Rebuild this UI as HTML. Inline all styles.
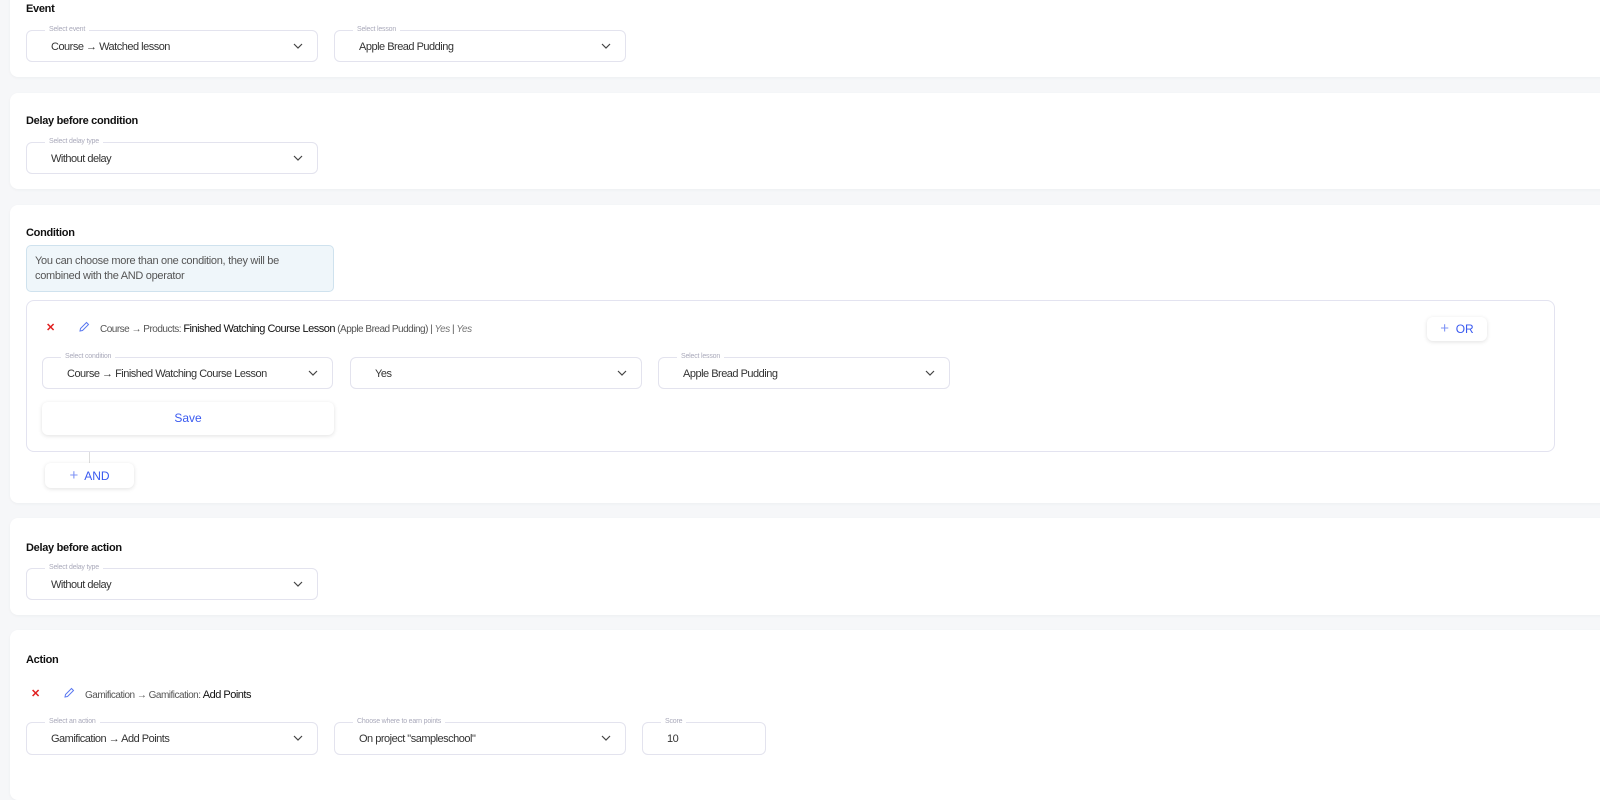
<!DOCTYPE html>
<html><head><style>
*{box-sizing:border-box;margin:0;padding:0}
body{width:1600px;height:780px;overflow:hidden;background:#f6f7f9;font-family:"Liberation Sans",sans-serif;position:relative;color:#333}
.card{position:absolute;left:10px;width:1620px;background:#fff;border-radius:8px;box-shadow:0 1px 3px rgba(0,0,0,0.04)}
.t{position:absolute;font-size:11px;font-weight:bold;color:#111;letter-spacing:-0.3px}
.sel{position:absolute;height:32px;border:1px solid #e3e3ee;border-radius:6px;background:#fff;font-size:11px;color:#333;letter-spacing:-0.5px}
.sel .v{position:absolute;left:24px;top:10px}
.sel .l{position:absolute;left:18px;top:-5px;font-size:7px;color:#aab;background:#fff;padding:0 4px;line-height:8px;letter-spacing:-0.2px}
.sel svg{position:absolute;right:14px;top:12px}
.btn{position:absolute;background:#fff;border-radius:6px;box-shadow:0 1px 4px rgba(0,0,0,0.12);color:#3a5af0;font-size:12px;text-align:center}
.x{position:absolute;color:#e02020;font-size:11px;font-weight:bold}
.small{position:absolute;font-size:10px;color:#555;letter-spacing:-0.5px;white-space:nowrap}
.small b{font-weight:normal;color:#111;font-size:11px}
.small i{color:#777}
</style></head><body>
<div class="card" style="top:-10px;height:87px"></div>
<div class="t" style="left:26px;top:3px">Event</div>
<div class="sel" style="left:26px;top:30px;width:292px"><span class="l">Select event</span><span class="v">Course → Watched lesson</span><svg width="10" height="6" viewBox="0 0 10 6"><path d="M1 1l4 4 4-4" fill="none" stroke="#444" stroke-width="1.2"/></svg></div>
<div class="sel" style="left:334px;top:30px;width:292px"><span class="l">Select lesson</span><span class="v">Apple Bread Pudding</span><svg width="10" height="6" viewBox="0 0 10 6"><path d="M1 1l4 4 4-4" fill="none" stroke="#444" stroke-width="1.2"/></svg></div>

<div class="card" style="top:93px;height:96px"></div>
<div class="t" style="left:26px;top:115px">Delay before condition</div>
<div class="sel" style="left:26px;top:142px;width:292px"><span class="l">Select delay type</span><span class="v">Without delay</span><svg width="10" height="6" viewBox="0 0 10 6"><path d="M1 1l4 4 4-4" fill="none" stroke="#444" stroke-width="1.2"/></svg></div>

<div class="card" style="top:205px;height:298px"></div>
<div class="t" style="left:26px;top:227px">Condition</div>
<div style="position:absolute;left:26px;top:245px;width:308px;height:47px;background:#eff6fa;border:1px solid #cfe2ee;border-radius:5px;font-size:11px;color:#555;padding:8px 8px;line-height:15px;letter-spacing:-0.3px">You can choose more than one condition, they will be combined with the AND operator</div>
<div style="position:absolute;left:26px;top:300px;width:1529px;height:152px;border:1px solid #e3e3f0;border-radius:8px"></div>
<div class="x" style="left:46px;top:321px">✕</div>
<svg style="position:absolute;left:78px;top:321px" width="12" height="12" viewBox="0 0 12 12"><path d="M2 10l0.5-2.5L8.5 1.5l2 2L4.5 9.5z" fill="none" stroke="#5a78f0" stroke-width="1"/></svg>
<div class="small" style="left:100px;top:323px">Course → Products: <b>Finished Watching Course Lesson</b> (Apple Bread Pudding) | <i>Yes</i> | <i>Yes</i></div>
<div class="btn" style="left:1427px;top:317px;width:60px;height:24px;line-height:24px"><span style="color:#7f93f5;font-size:15px">+</span>&nbsp; OR</div>
<div class="sel" style="left:42px;top:357px;width:291px"><span class="l">Select condition</span><span class="v">Course → Finished Watching Course Lesson</span><svg width="10" height="6" viewBox="0 0 10 6"><path d="M1 1l4 4 4-4" fill="none" stroke="#444" stroke-width="1.2"/></svg></div>
<div class="sel" style="left:350px;top:357px;width:292px"><span class="v">Yes</span><svg width="10" height="6" viewBox="0 0 10 6"><path d="M1 1l4 4 4-4" fill="none" stroke="#444" stroke-width="1.2"/></svg></div>
<div class="sel" style="left:658px;top:357px;width:292px"><span class="l">Select lesson</span><span class="v">Apple Bread Pudding</span><svg width="10" height="6" viewBox="0 0 10 6"><path d="M1 1l4 4 4-4" fill="none" stroke="#444" stroke-width="1.2"/></svg></div>
<div class="btn" style="left:42px;top:402px;width:292px;height:33px;line-height:33px">Save</div>
<div style="position:absolute;left:89px;top:452px;width:1px;height:12px;background:#ddd"></div>
<div class="btn" style="left:45px;top:463px;width:89px;height:25px;line-height:25px"><span style="color:#7f93f5;font-size:15px">+</span>&nbsp; AND</div>

<div class="card" style="top:518px;height:97px"></div>
<div class="t" style="left:26px;top:542px">Delay before action</div>
<div class="sel" style="left:26px;top:568px;width:292px"><span class="l">Select delay type</span><span class="v">Without delay</span><svg width="10" height="6" viewBox="0 0 10 6"><path d="M1 1l4 4 4-4" fill="none" stroke="#444" stroke-width="1.2"/></svg></div>

<div class="card" style="top:630px;height:170px"></div>
<div class="t" style="left:26px;top:654px">Action</div>
<div class="x" style="left:31px;top:687px">✕</div>
<svg style="position:absolute;left:63px;top:687px" width="12" height="12" viewBox="0 0 12 12"><path d="M2 10l0.5-2.5L8.5 1.5l2 2L4.5 9.5z" fill="none" stroke="#5a78f0" stroke-width="1"/></svg>
<div class="small" style="left:85px;top:689px">Gamification → Gamification: <b>Add Points</b></div>
<div class="sel" style="left:26px;top:722px;width:292px;height:33px"><span class="l">Select an action</span><span class="v">Gamification → Add Points</span><svg width="10" height="6" viewBox="0 0 10 6"><path d="M1 1l4 4 4-4" fill="none" stroke="#444" stroke-width="1.2"/></svg></div>
<div class="sel" style="left:334px;top:722px;width:292px;height:33px"><span class="l">Choose where to earn points</span><span class="v">On project "sampleschool"</span><svg width="10" height="6" viewBox="0 0 10 6"><path d="M1 1l4 4 4-4" fill="none" stroke="#444" stroke-width="1.2"/></svg></div>
<div class="sel" style="left:642px;top:722px;width:124px;height:33px"><span class="l">Score</span><span class="v">10</span></div>
</body></html>
